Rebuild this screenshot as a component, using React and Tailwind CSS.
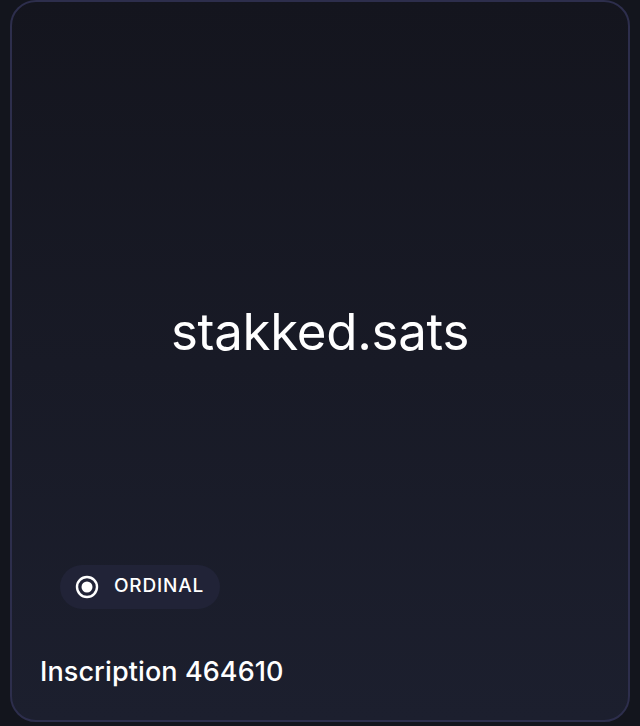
export default function App() {
  return (
    <div className="w-[640px] h-[726px] bg-[#13151d] px-[10px] pt-0 pb-[4px]" style={{ fontFamily: 'Inter, "Noto Sans", sans-serif' }}>
      <div className="h-[722px] rounded-[26px] border-2 border-[#2d2e4c] bg-gradient-to-b from-[#14151e] to-[#1c1f2e] flex flex-col">
        <div className="flex-1 flex items-center justify-center pt-[98px]">
          <span className="text-[51px] text-white tracking-[-0.3px]">stakked.sats</span>
        </div>
        <div className="pl-[48px] pb-[10px]">
          <div className="inline-flex items-center gap-[15px] h-[44px] pl-[15px] pr-[16px] rounded-full bg-[#212337]">
            <svg width="24" height="24" viewBox="0 0 24 24">
              <circle cx="12" cy="12" r="10" fill="none" stroke="white" strokeWidth="2.4" />
              <circle cx="12" cy="12" r="5.5" fill="white" />
            </svg>
            <span className="text-[19px] font-medium text-white tracking-[0.8px]">ORDINAL</span>
          </div>
        </div>
        <div className="pl-[28px] pb-[28px] pt-[33px]">
          <span className="text-[27px] font-medium text-white tracking-[0.1px]">Inscription 464610</span>
        </div>
      </div>
    </div>
  );
}
